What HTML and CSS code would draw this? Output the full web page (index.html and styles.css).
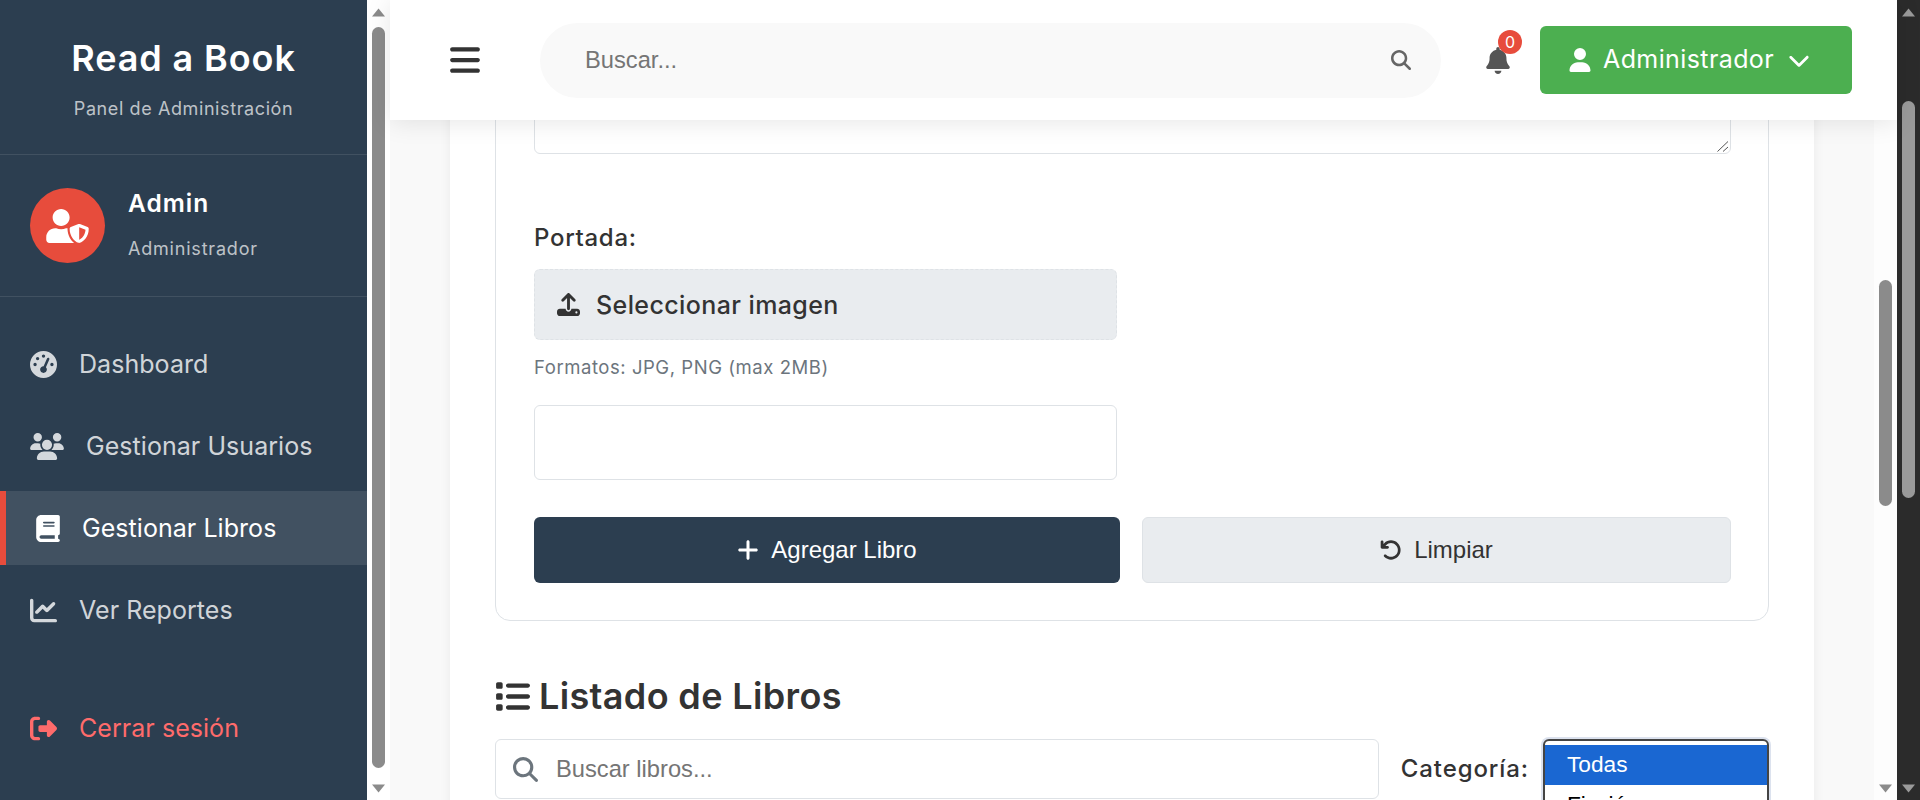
FILE: index.html
```html
<!DOCTYPE html>
<html lang="es">

<head>
    <meta charset="UTF-8">
    <title>Read a Book - Panel de Administración</title>
    <link rel="stylesheet" href="styles.css">
</head>

<body>
    <!-- Sidebar -->
    <aside class="sidebar">
        <div class="brand">
            <h1>Read a Book</h1>
            <p>Panel de Administración</p>
        </div>

        <div class="profile">
            <div class="avatar">
                <svg class="avatar-icon" viewBox="0 0 640 512">
                    <path d="M622.3 271.1l-115.2-45c-4.1-1.6-12.6-3.7-22.2 0l-115.2 45c-10.7 4.2-17.7 14-17.7 24.9 0 111.6 68.7 188.8 132.9 213.9 9.6 3.7 18 1.6 22.2 0C558.4 489.9 640 420.5 640 296c0-10.9-7-20.7-17.7-24.9zM496 462.4V273.3l95.5 37.3c-5.6 87.1-60.9 135.4-95.5 151.8zM224 256c70.7 0 128-57.3 128-128S294.7 0 224 0 96 57.3 96 128s57.3 128 128 128zm96 40c0-2.5.8-4.8 1.1-7.2-2.5-.1-4.9-.8-7.5-.8h-16.7c-22.2 10.2-46.9 16-72.9 16s-50.6-5.8-72.9-16h-16.7C60.2 288 0 348.2 0 422.4V464c0 26.5 21.5 48 48 48h352c6.2 0 12.1-1.3 17.5-3.4C369.3 469.1 320 393.7 320 296z"/>
                </svg>
            </div>
            <div class="profile-text">
                <strong>Admin</strong>
                <span>Administrador</span>
            </div>
        </div>

        <nav class="menu">
            <a class="menu-item" href="#">
                <svg class="icon-gauge" viewBox="0 0 512 512"><path d="M0 256a256 256 0 1 1 512 0A256 256 0 1 1 0 256zM288 96a32 32 0 1 0 -64 0 32 32 0 1 0 64 0zM256 416c35.3 0 64-28.7 64-64c0-17.4-6.9-33.1-18.1-44.6L366 161.7c5.3-12.1-.2-26.3-12.3-31.6s-26.3 .2-31.6 12.3L257.9 288c-.6 0-1.3 0-1.9 0c-35.3 0-64 28.7-64 64s28.7 64 64 64zM176 144a32 32 0 1 0 -64 0 32 32 0 1 0 64 0zM96 288a32 32 0 1 0 0-64 32 32 0 1 0 0 64zm352-32a32 32 0 1 0 -64 0 32 32 0 1 0 64 0z"/></svg>
                Dashboard
            </a>
            <a class="menu-item" href="#">
                <svg class="icon-users" viewBox="0 0 640 512"><path d="M144 0a80 80 0 1 1 0 160A80 80 0 1 1 144 0zM512 0a80 80 0 1 1 0 160A80 80 0 1 1 512 0zM0 298.7C0 239.8 47.8 192 106.7 192h42.7c15.9 0 31 3.5 44.6 9.7c-1.3 7.2-1.9 14.7-1.9 22.3c0 38.2 16.8 72.5 43.3 96c-.2 0-.4 0-.7 0H21.3C9.6 320 0 310.4 0 298.7zM405.3 320c-.2 0-.4 0-.7 0c26.6-23.5 43.3-57.8 43.3-96c0-7.6-.7-15-1.9-22.3c13.6-6.3 28.7-9.7 44.6-9.7h42.7C592.2 192 640 239.8 640 298.7c0 11.8-9.6 21.3-21.3 21.3H405.3zM224 224a96 96 0 1 1 192 0 96 96 0 1 1 -192 0zM128 485.3C128 411.7 187.7 352 261.3 352H378.7C452.3 352 512 411.7 512 485.3c0 14.7-11.9 26.7-26.7 26.7H154.7c-14.7 0-26.7-11.9-26.7-26.7z"/></svg>
                Gestionar Usuarios
            </a>
            <a class="menu-item active" href="#">
                <svg class="icon-book" viewBox="0 0 448 512"><path d="M96 0C43 0 0 43 0 96V416c0 53 43 96 96 96H384h32c17.7 0 32-14.3 32-32s-14.3-32-32-32V384c17.7 0 32-14.3 32-32V32c0-17.7-14.3-32-32-32H384 96zm0 384H352v64H96c-17.7 0-32-14.3-32-32s14.3-32 32-32zm32-240c0-8.8 7.2-16 16-16H336c8.8 0 16 7.2 16 16s-7.2 16-16 16H144c-8.8 0-16-7.2-16-16zm16 48H336c8.8 0 16 7.2 16 16s-7.2 16-16 16H144c-8.8 0-16-7.2-16-16s7.2-16 16-16z"/></svg>
                Gestionar Libros
            </a>
            <a class="menu-item" href="#">
                <svg class="icon-gauge" viewBox="0 0 512 512"><path d="M64 64c0-17.7-14.3-32-32-32S0 46.3 0 64V400c0 44.2 35.8 80 80 80H480c17.7 0 32-14.3 32-32s-14.3-32-32-32H80c-8.8 0-16-7.2-16-16V64zm406.6 86.6c12.5-12.5 12.5-32.8 0-45.3s-32.8-12.5-45.3 0L320 210.7l-57.4-57.4c-12.5-12.5-32.8-12.5-45.3 0l-112 112c-12.5 12.5-12.5 32.8 0 45.3s32.8 12.5 45.3 0L240 221.3l57.4 57.4c12.5 12.5 32.8 12.5 45.3 0l128-128z"/></svg>
                Ver Reportes
            </a>
            <a class="menu-item logout" href="#">
                <svg class="icon-gauge" viewBox="0 0 512 512"><path d="M377.9 105.9L500.7 228.7c7.2 7.2 11.3 17.1 11.3 27.3s-4.1 20.1-11.3 27.3L377.9 406.1c-6.4 6.4-15 9.9-24 9.9c-18.7 0-33.9-15.2-33.9-33.9l0-62.1-128 0c-17.7 0-32-14.3-32-32l0-64c0-17.7 14.3-32 32-32l128 0 0-62.1c0-18.7 15.2-33.9 33.9-33.9c9 0 17.6 3.6 24 9.9zM160 96L96 96c-17.7 0-32 14.3-32 32l0 256c0 17.7 14.3 32 32 32l64 0c17.7 0 32 14.3 32 32s-14.3 32-32 32l-64 0c-53 0-96-43-96-96L0 128C0 75 43 32 96 32l64 0c17.7 0 32 14.3 32 32s-14.3 32-32 32z"/></svg>
                Cerrar sesión
            </a>
        </nav>
    </aside>

    <!-- Sidebar scrollbar -->
    <div class="scrollbar scrollbar-side">
        <svg class="arrow" viewBox="0 0 15 10"><path d="M7.5 1 14 9H1z"/></svg>
        <div class="thumb thumb-side"></div>
        <svg class="arrow" viewBox="0 0 15 10"><path d="M1 1h13L7.5 9z"/></svg>
    </div>

    <div class="main">
        <!-- Top bar -->
        <header class="topbar">
            <svg class="hamburger" viewBox="0 0 448 512"><path d="M0 96C0 78.3 14.3 64 32 64H416c17.7 0 32 14.3 32 32s-14.3 32-32 32H32C14.3 128 0 113.7 0 96zM0 256c0-17.7 14.3-32 32-32H416c17.7 0 32 14.3 32 32s-14.3 32-32 32H32c-17.7 0-32-14.3-32-32zM448 416c0 17.7-14.3 32-32 32H32c-17.7 0-32-14.3-32-32s14.3-32 32-32H416c17.7 0 32 14.3 32 32z"/></svg>
            <div class="topsearch">
                <input type="text" placeholder="Buscar...">
                <svg viewBox="0 0 512 512"><path d="M416 208c0 45.9-14.9 88.3-40 122.7L502.6 457.4c12.5 12.5 12.5 32.8 0 45.3s-32.8 12.5-45.3 0L330.7 376c-34.4 25.2-76.8 40-122.7 40C93.1 416 0 322.9 0 208S93.1 0 208 0S416 93.1 416 208zM208 352a144 144 0 1 0 0-288 144 144 0 1 0 0 288z"/></svg>
            </div>
            <div class="bell">
                <svg viewBox="0 0 448 512"><path d="M224 0c-17.7 0-32 14.3-32 32V51.2C119 66 64 130.6 64 208v18.8c0 47-17.3 92.4-48.5 127.6l-7.4 8.3c-8.4 9.4-10.4 22.9-5.3 34.4S19.4 416 32 416H416c12.6 0 24-7.4 29.2-18.9s3.1-25-5.3-34.4l-7.4-8.3C401.3 319.2 384 273.9 384 226.8V208c0-77.4-55-142-128-156.8V32c0-17.7-14.3-32-32-32zm45.3 493.3c12-12 18.7-28.3 18.7-45.3H224 160c0 17 6.7 33.3 18.7 45.3s28.3 18.7 45.3 18.7s33.3-6.7 45.3-18.7z"/></svg>
                <span class="badge">0</span>
            </div>
            <button class="user-btn" type="button">
                <svg class="user-icon" viewBox="0 0 448 512"><path d="M224 256A128 128 0 1 0 224 0a128 128 0 1 0 0 256zm-45.7 48C79.8 304 0 383.8 0 482.3C0 498.7 13.3 512 29.7 512H418.3c16.4 0 29.7-13.3 29.7-29.7C448 383.8 368.2 304 269.7 304H178.3z"/></svg>
                <span>Administrador</span>
                <svg class="chevron" viewBox="0 0 512 512"><path d="M233.4 406.6c12.5 12.5 32.8 12.5 45.3 0l192-192c12.5-12.5 12.5-32.8 0-45.3s-32.8-12.5-45.3 0L256 338.7 86.6 169.4c-12.5-12.5-32.8-12.5-45.3 0s-12.5 32.8 0 45.3l192 192z"/></svg>
            </button>
        </header>

        <div class="body-row">
            <main class="content">
                <div class="card">
                    <form class="form-box">
                        <div class="text-wrap">
                            <textarea class="field-text"></textarea>
                            <svg class="grip" viewBox="0 0 12 11"><path d="M0.5 10.5 11 0.5M6 10.5 11 6"/></svg>
                        </div>

                        <label class="field-label">Portada:</label>
                        <div class="upload">
                            <svg viewBox="0 0 512 512"><path d="M288 109.3V352c0 17.7-14.3 32-32 32s-32-14.3-32-32V109.3l-73.4 73.4c-12.5 12.5-32.8 12.5-45.3 0s-12.5-32.8 0-45.3l128-128c12.5-12.5 32.8-12.5 45.3 0l128 128c12.5 12.5 12.5 32.8 0 45.3s-32.8 12.5-45.3 0L288 109.3zM64 352H192c0 35.3 28.7 64 64 64s64-28.7 64-64H448c35.3 0 64 28.7 64 64v32c0 35.3-28.7 64-64 64H64c-35.3 0-64-28.7-64-64V416c0-35.3 28.7-64 64-64zM432 456a24 24 0 1 0 0-48 24 24 0 1 0 0 48z"/></svg>
                            Seleccionar imagen
                        </div>
                        <p class="hint">Formatos: JPG, PNG (max 2MB)</p>
                        <div class="preview"></div>

                        <div class="actions">
                            <button class="btn btn-primary" type="button">
                                <svg viewBox="0 0 448 512"><path d="M256 80c0-17.7-14.3-32-32-32s-32 14.3-32 32V224H48c-17.7 0-32 14.3-32 32s14.3 32 32 32H192V432c0 17.7 14.3 32 32 32s32-14.3 32-32V288H400c17.7 0 32-14.3 32-32s-14.3-32-32-32H256V80z"/></svg>
                                Agregar Libro
                            </button>
                            <button class="btn btn-light" type="button">
                                <svg viewBox="0 0 512 512"><path d="M125.7 160H176c17.7 0 32 14.3 32 32s-14.3 32-32 32H48c-17.7 0-32-14.3-32-32V64c0-17.7 14.3-32 32-32s32 14.3 32 32v51.2L97.6 97.6c87.5-87.5 229.3-87.5 316.8 0s87.5 229.3 0 316.8s-229.3 87.5-316.8 0c-12.5-12.5-12.5-32.8 0-45.3s32.8-12.5 45.3 0c62.5 62.5 163.8 62.5 226.3 0s62.5-163.8 0-226.3s-163.8-62.5-226.3 0L125.7 160z"/></svg>
                                Limpiar
                            </button>
                        </div>
                    </form>

                    <h2 class="list-title">
                        <svg viewBox="0 0 512 512"><path d="M40 48C26.7 48 16 58.7 16 72v48c0 13.3 10.7 24 24 24H88c13.3 0 24-10.7 24-24V72c0-13.3-10.7-24-24-24H40zM192 64c-17.7 0-32 14.3-32 32s14.3 32 32 32H480c17.7 0 32-14.3 32-32s-14.3-32-32-32H192zm0 160c-17.7 0-32 14.3-32 32s14.3 32 32 32H480c17.7 0 32-14.3 32-32s-14.3-32-32-32H192zm0 160c-17.7 0-32 14.3-32 32s14.3 32 32 32H480c17.7 0 32-14.3 32-32s-14.3-32-32-32H192zM16 232v48c0 13.3 10.7 24 24 24H88c13.3 0 24-10.7 24-24V232c0-13.3-10.7-24-24-24H40c-13.3 0-24 10.7-24 24zM40 368c-13.3 0-24 10.7-24 24v48c0 13.3 10.7 24 24 24H88c13.3 0 24-10.7 24-24V392c0-13.3-10.7-24-24-24H40z"/></svg>
                        Listado de Libros
                    </h2>

                    <div class="filters">
                        <div class="list-search">
                            <svg viewBox="0 0 512 512"><path d="M416 208c0 45.9-14.9 88.3-40 122.7L502.6 457.4c12.5 12.5 12.5 32.8 0 45.3s-32.8 12.5-45.3 0L330.7 376c-34.4 25.2-76.8 40-122.7 40C93.1 416 0 322.9 0 208S93.1 0 208 0S416 93.1 416 208zM208 352a144 144 0 1 0 0-288 144 144 0 1 0 0 288z"/></svg>
                            <input type="text" placeholder="Buscar libros...">
                        </div>
                        <span class="filter-label">Categoría:</span>
                        <div class="listbox">
                            <div class="option selected">Todas</div>
                            <div class="option">Ficción</div>
                        </div>
                    </div>
                </div>
            </main>

            <!-- Page scrollbar -->
            <div class="scrollbar scrollbar-page">
                <div class="thumb thumb-page"></div>
                <svg class="arrow" viewBox="0 0 15 10"><path d="M1 1h13L7.5 9z"/></svg>
            </div>
        </div>
    </div>

    <!-- Browser scrollbar -->
    <div class="scrollbar scrollbar-window">
        <svg class="arrow" viewBox="0 0 15 10"><path d="M7.5 1 14 9H1z"/></svg>
        <div class="thumb thumb-window"></div>
        <svg class="arrow" viewBox="0 0 15 10"><path d="M1 1h13L7.5 9z"/></svg>
    </div>
</body>

</html>
```

FILE: styles.css
```css
* {
    box-sizing: border-box;
}

html,
body {
    height: 800px;
    margin: 0;
    overflow: hidden;
}

body {
    display: flex;
    font-family: "Inter", "Liberation Sans", sans-serif;
    color: #333;
    background-color: #f9f9f9;
}

svg {
    fill: currentColor;
    flex-shrink: 0;
}

/* Sidebar */
.sidebar {
    width: 367px;
    flex-shrink: 0;
    background-color: #2c3e50;
    color: #fff;
}

.brand {
    height: 155px;
    padding-top: 36px;
    text-align: center;
    border-bottom: 1px solid rgba(255, 255, 255, 0.1);
}

.brand h1 {
    margin: 0;
    font-size: 36px;
    line-height: 44px;
    font-weight: 600;
    letter-spacing: 0.9px;
}

.brand p {
    margin: 17px 0 0;
    font-size: 18px;
    line-height: 24px;
    letter-spacing: 0.6px;
    color: rgba(255, 255, 255, 0.7);
}

.profile {
    height: 142px;
    display: flex;
    align-items: center;
    gap: 23px;
    padding-left: 30px;
    border-bottom: 1px solid rgba(255, 255, 255, 0.1);
}

.avatar {
    width: 75px;
    height: 75px;
    display: flex;
    align-items: center;
    justify-content: center;
    border-radius: 50%;
    background-color: #e74c3c;
}

.avatar-icon {
    width: 43px;
    height: 34px;
}

.profile-text {
    padding-bottom: 3px;
}

.profile-text strong {
    display: block;
    font-size: 24.5px;
    line-height: 30px;
    font-weight: 600;
    letter-spacing: 1px;
}

.profile-text span {
    display: block;
    margin-top: 19px;
    font-size: 18px;
    line-height: 24px;
    letter-spacing: 0.8px;
    color: rgba(255, 255, 255, 0.7);
}

.menu {
    padding-top: 30px;
    display: flex;
    flex-direction: column;
    gap: 8px;
}

.menu-item {
    height: 74px;
    display: flex;
    align-items: center;
    gap: 22px;
    padding-left: 30px;
    font-size: 25px;
    letter-spacing: 0.05px;
    color: rgba(255, 255, 255, 0.8);
    text-decoration: none;
}

.menu-item.active {
    border-left: 6px solid #e74c3c;
    background-color: rgba(255, 255, 255, 0.1);
    color: #fff;
}

.menu-item.logout {
    margin-top: 36px;
    color: #ff6b6b;
}

.icon-gauge {
    width: 27px;
    height: 27px;
}

.icon-users {
    width: 34px;
    height: 27px;
}

.icon-book {
    width: 24px;
    height: 27px;
}

/* Scrollbars */
.scrollbar {
    width: 23px;
    flex-shrink: 0;
    display: flex;
    flex-direction: column;
    align-items: center;
    padding: 7px 0 6px;
    color: #8b8b8b;
}

.scrollbar-side {
    background-color: #fff;
}

.scrollbar-page {
    justify-content: space-between;
    padding-top: 160px;
    background-color: #fdfdfd;
}

.scrollbar-window {
    background-color: #2b2b2b;
    color: #9a9a9a;
}

.arrow {
    width: 15px;
    height: 11px;
}

.thumb {
    width: 13px;
    border-radius: 7px;
    background-color: #8b8b8b;
}

.thumb-side {
    height: 741px;
    margin: 9px 0 auto;
}

.thumb-page {
    height: 226px;
}

.thumb-window {
    height: 397px;
    margin: 83px 0 auto;
    background-color: #9a9a9a;
}

/* Top bar */
.main {
    flex: 1;
    min-width: 0;
    display: flex;
    flex-direction: column;
}

.topbar {
    position: relative;
    z-index: 2;
    height: 120px;
    flex-shrink: 0;
    display: flex;
    align-items: center;
    padding-left: 60px;
    background-color: #fff;
    box-shadow: 0 2px 24px rgba(0, 0, 0, 0.1);
}

.hamburger {
    width: 30px;
    height: 34px;
    color: #333;
}

.topsearch {
    width: 901px;
    height: 75px;
    margin-left: 60px;
    display: flex;
    align-items: center;
    padding: 0 30px 0 45px;
    border-radius: 38px;
    background-color: #f9f9f9;
    color: #666;
}

.topsearch input {
    flex: 1;
    border: none;
    outline: none;
    padding: 0;
    background: transparent;
    font-family: "Liberation Sans", Arial, sans-serif;
    font-size: 23.7px;
}

.topsearch input::placeholder {
    color: #757575;
}

.topsearch svg {
    width: 20px;
    height: 20px;
}

.bell {
    position: relative;
    margin-left: 45px;
    color: #555;
    display: flex;
}

.bell svg {
    width: 24px;
    height: 27px;
}

.badge {
    position: absolute;
    top: -17px;
    left: 12px;
    width: 24px;
    height: 24px;
    border-radius: 50%;
    background-color: #e74c3c;
    color: #fff;
    font-size: 16px;
    line-height: 24px;
    text-align: center;
}

.user-btn {
    width: 312px;
    height: 68px;
    margin-left: 30px;
    display: flex;
    align-items: center;
    padding: 0 0 0 29px;
    border: none;
    border-radius: 6px;
    background-color: #4caf50;
    color: #fff;
    font-family: inherit;
    font-size: 25px;
    letter-spacing: 0.4px;
}

.user-btn span {
    margin-bottom: 2px;
}

.user-icon {
    width: 22px;
    height: 24px;
    margin-right: 12px;
}

.chevron {
    width: 22px;
    height: 22px;
    margin-left: 14px;
}

/* Content */
.body-row {
    flex: 1;
    min-height: 0;
    display: flex;
}

.content {
    flex: 1;
    min-width: 0;
    overflow: hidden;
    padding: 0 60px;
}

.card {
    margin-top: -60px;
    padding: 0 45px;
    background-color: #fff;
    box-shadow: 0 0 12px rgba(0, 0, 0, 0.06);
}

.form-box {
    display: flex;
    flex-direction: column;
    padding: 30px 37px 37px 38px;
    border: 1px solid #dee2e6;
    border-radius: 15px;
}

.text-wrap {
    position: relative;
}

.field-text {
    display: block;
    width: 100%;
    height: 63px;
    border: 1px solid #dee2e6;
    border-radius: 6px;
    outline: none;
    resize: none;
}

.grip {
    position: absolute;
    right: 2px;
    bottom: 2px;
    width: 12px;
    height: 11px;
    fill: none;
    stroke: #555;
    stroke-width: 1;
}

.field-label {
    margin-top: 69px;
    font-size: 24px;
    line-height: 30px;
    font-weight: 500;
    letter-spacing: 0.7px;
}

.upload {
    width: 583px;
    height: 71px;
    margin-top: 16px;
    display: flex;
    align-items: center;
    gap: 16px;
    padding-left: 22px;
    border: 1px dashed #dee2e6;
    border-radius: 6px;
    background-color: #e9ecef;
    font-size: 25px;
    font-weight: 500;
    letter-spacing: 0.4px;
}

.upload svg {
    width: 23px;
    height: 23px;
}

.hint {
    margin: 14px 0 0;
    font-size: 18.5px;
    line-height: 26px;
    letter-spacing: 0.55px;
    color: #6c757d;
}

.preview {
    width: 583px;
    height: 75px;
    margin-top: 25px;
    border: 1px solid #dee2e6;
    border-radius: 6px;
}

.actions {
    display: flex;
    gap: 22px;
    margin-top: 37px;
}

.btn {
    height: 66px;
    display: flex;
    align-items: center;
    justify-content: center;
    gap: 12px;
    border: 1px solid transparent;
    border-radius: 6px;
    font-family: "Liberation Sans", Arial, sans-serif;
    font-size: 24px;
}

.btn svg {
    width: 22px;
    height: 24px;
}

.btn-primary {
    flex: 0 0 586px;
    background-color: #2c3e50;
    color: #fff;
}

.btn-light {
    flex: 1;
    background-color: #e9ecef;
    border-color: #dee2e6;
    color: #333;
}

.list-title {
    display: flex;
    align-items: center;
    gap: 9px;
    margin: 50px 0 18px;
    font-size: 36px;
    line-height: 50px;
    font-weight: 600;
    letter-spacing: 0.35px;
}

.list-title svg {
    width: 35px;
    height: 35px;
}

.filters {
    display: flex;
    align-items: flex-start;
}

.list-search {
    flex: 1;
    height: 60px;
    display: flex;
    align-items: center;
    gap: 18px;
    padding-left: 17px;
    border: 1px solid #dee2e6;
    border-radius: 6px;
    color: #6c757d;
}

.list-search svg {
    width: 25px;
    height: 25px;
}

.list-search input {
    flex: 1;
    border: none;
    outline: none;
    padding: 0;
    font-family: "Liberation Sans", Arial, sans-serif;
    font-size: 23.7px;
}

.list-search input::placeholder {
    color: #757575;
}

.filter-label {
    margin: 0 14px 0 22px;
    font-size: 24px;
    line-height: 60px;
    font-weight: 500;
    letter-spacing: 0.9px;
}

.listbox {
    width: 226px;
    height: 200px;
    padding-top: 4px;
    border: 2px solid #444;
    border-radius: 6px;
    background-color: #fff;
    box-shadow: 0 0 0 2px #dce2ee;
    font-family: "Liberation Sans", Arial, sans-serif;
    font-size: 22.7px;
    color: #000;
}

.option {
    height: 40px;
    padding-left: 22px;
    line-height: 38px;
}

.option.selected {
    background-color: #1a67d2;
    color: #fff;
}
```
